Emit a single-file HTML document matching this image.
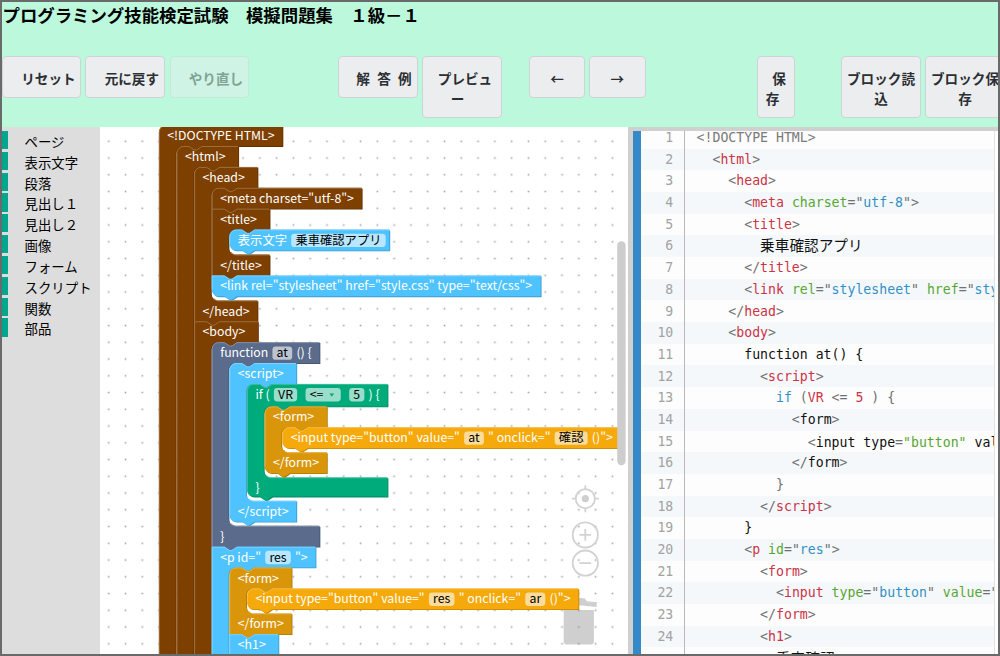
<!DOCTYPE html>
<html lang="ja">
<head>
<meta charset="utf-8">
<title>プログラミング技能検定試験 模擬問題集 １級－１</title>
<style>
html,body{margin:0;padding:0;}
body{width:1000px;height:656px;overflow:hidden;background:#fff;position:relative;
 font-family:"Noto Sans CJK JP","Liberation Sans",sans-serif;}
#hdr{position:absolute;left:0;top:0;width:1000px;height:127px;background:#bcf8dc;z-index:5;}
#ttl{position:absolute;left:2.5px;top:2.5px;font-weight:bold;font-size:17.4px;line-height:24px;color:#000;white-space:nowrap;}
.btn{position:absolute;top:56.1px;box-sizing:border-box;height:41.6px;border:1px solid #cfd3d7;border-radius:4px;
 background:#ebedef;color:#2b2f33;font-weight:bold;font-size:13.6px;line-height:20px;text-align:center;
 padding-top:10.8px;white-space:nowrap;}
.btn.two{height:61.5px;}
.btn.dis{opacity:.42;}
.btn span{display:block;}
#tbx{position:absolute;left:0;top:127px;width:100px;height:529px;background:#ddd;}
#tbx div{position:absolute;left:2px;width:98px;height:18.3px;border-left:6px solid #00a78e;box-sizing:border-box;
 font-size:13.4px;line-height:20.3px;color:#000;padding-left:16.6px;white-space:nowrap;}
#ws{position:absolute;left:100px;top:126.8px;width:528px;height:530px;background:#fff;overflow:hidden;}
#ws svg{position:absolute;left:0;top:0;}
#ws text{font-family:"Noto Sans CJK JP",sans-serif;font-size:14.667px;}
#cp{position:absolute;left:628px;top:127px;width:372px;height:529px;background:#fff;overflow:hidden;}
#cp .bt{position:absolute;left:0;top:0;width:372px;height:3.9px;background:#d0d0d0;z-index:3;}
#cp .bl{position:absolute;left:0;top:0;width:4.9px;height:529px;background:#d0d0d0;z-index:3;}
#cp .blue{position:absolute;left:4.9px;top:3.9px;width:7.8px;height:526px;background:#3689c9;z-index:2;}
#cp .gl{position:absolute;left:55.8px;top:3.9px;width:1px;height:526px;background:#b9b9b9;z-index:2;}
#cp .rl{position:absolute;left:366.4px;top:3.9px;width:1px;height:526px;background:#e2e2e2;z-index:2;}
#cp ol{list-style:none;margin:0;padding:0;position:absolute;left:12.7px;top:-0.1px;width:353.7px;}
#cp li{height:21.7px;line-height:21.7px;background:#fdfdfd;white-space:pre;position:relative;overflow:hidden;
 font-family:"DejaVu Sans Mono","Noto Sans CJK JP",monospace;font-size:13.2px;color:#111;}
#cp li b{font-weight:normal;font-size:14.65px;}
#cp li:nth-child(even){background:#f5f8fb;}
#cp li i{font-style:normal;position:absolute;left:0;top:0.1px;width:32.6px;text-align:right;color:#a2a2a2;}
#cp li code{font:inherit;position:absolute;left:55.9px;top:0.1px;}
.pun{color:#707070}.tag{color:#cc3344}.atn{color:#58a632}.atv{color:#3390c4}.dec{color:#7a7a7a}.kwd{color:#3390c4}.lit{color:#cc3344}.str{color:#58a632}
#frame{position:absolute;left:0;top:0;width:1000px;height:656px;box-sizing:border-box;border:2px solid #6a6a6a;border-bottom-width:2.3px;z-index:20;pointer-events:none;}
</style>
</head>
<body>
<div id="hdr">
 <div id="ttl">プログラミング技能検定試験　模擬問題集　１級－１</div>
 <div class="btn" style="left:2px;width:79.4px;padding-left:13.5px">リセット</div>
 <div class="btn" style="left:85.3px;width:80.1px;padding-left:13px">元に戻す</div>
 <div class="btn dis" style="left:169.5px;width:79.8px;padding-left:13px">やり直し</div>
 <div class="btn" style="left:337.5px;width:80px;padding-left:13px;word-spacing:4.2px">解 答 例</div>
 <div class="btn two" style="left:421.5px;width:80px;"><span style="padding-left:7px">プレビュ</span><span style="padding-right:8px">ー</span></div>
 <div class="btn" style="left:529px;width:56px;">←</div>
 <div class="btn" style="left:589px;width:56.5px;">→</div>
 <div class="btn two" style="left:757px;width:38px;"><span style="padding-left:6px">保</span><span style="padding-right:7px">存</span></div>
 <div class="btn two" style="left:841px;width:80px;"><span>ブロック読</span><span>込</span></div>
 <div class="btn two" style="left:925px;width:80px;"><span>ブロック保</span><span>存</span></div>
</div>
<div id="tbx">
 <div style="top:3.8px">ページ</div>
 <div style="top:24.65px">表示文字</div>
 <div style="top:45.5px">段落</div>
 <div style="top:66.35px">見出し１</div>
 <div style="top:87.2px">見出し２</div>
 <div style="top:108.05px">画像</div>
 <div style="top:128.9px">フォーム</div>
 <div style="top:149.75px">スクリプト</div>
 <div style="top:170.6px">関数</div>
 <div style="top:191.45px">部品</div>
</div>
<div id="ws">
<svg width="528" height="530" viewBox="0 0 528 530">
 <defs>
  <pattern id="grid" x="0.3" y="5.9" width="16.79" height="16.75" patternUnits="userSpaceOnUse">
   <rect x="7.6" y="7.6" width="1.6" height="1.6" fill="#a4a4a4"/>
  </pattern>
 </defs>
 <rect x="0" y="0" width="528" height="530" fill="url(#grid)"/>
 <!-- zoom controls -->
 <g fill="none" stroke="#d2d2d2" stroke-width="1.8">
  <circle cx="485.3" cy="371.7" r="9.6"/>
  <path d="M485.3 358.2v4M485.3 381.2v4M471.8 371.7h4M494.8 371.7h4"/>
  <circle cx="485.3" cy="407.9" r="12.6"/>
  <path d="M479.4 407.9h11.8M485.3 402v11.8"/>
  <circle cx="485.3" cy="436.1" r="12.6"/>
  <path d="M479.4 436.1h11.8"/>
 </g>
 <circle cx="485.3" cy="371.7" r="3.6" fill="#cfcfcf"/>
 <!-- trash -->
 <g fill="#7a7a7a" fill-opacity=".36">
  <path d="M463.7 483h30.2v31.5a3 3 0 0 1-3 3h-24.2a3 3 0 0 1-3-3z"/>
  <path transform="rotate(5.6 463 476.7)" d="M463 472h10.3l1.6-2.6h9.4l2.2 2.6h10.2v4.7h-33.7z"/>
 </g>
<g transform="translate(58.9,-1.76) scale(0.83920,0.83450)">
<path transform="translate(1,1)" d="M 0,8 A 8,8 0 0,1 8,0 H 147.26 V 25 H 50 l -6,4 -3,0 -6,-4 h -7 a 8,8 0 0,0 -8,8 v 744 a 8,8 0 0,0 8,8 H 147.26 V 810 H 30 l -6,4 -3,0 -6,-4 H 8 a 8,8 0 0,1 -8,-8 z" fill="#643300"/>
<path transform="translate(0,0)" d="M 0,8 A 8,8 0 0,1 8,0 H 147.26 V 25 H 50 l -6,4 -3,0 -6,-4 h -7 a 8,8 0 0,0 -8,8 v 744 a 8,8 0 0,0 8,8 H 147.26 V 810 H 30 l -6,4 -3,0 -6,-4 H 8 a 8,8 0 0,1 -8,-8 z" fill="#7d4000"/>
<path transform="translate(0,0)" d="M 0.5,802 V 8 A 7.5,7.5 0 0,1 8,0.5 H 146.76 M 22.99,782.01 a 8.5,8.5 0 0,0 5.01,3.49 H 146.76" fill="none" stroke="#a4794c" stroke-width="1"/>
<path transform="translate(22,26)" d="M 0,8 A 8,8 0 0,1 8,0 H 15 l 6,4 3,0 6,-4 H 73.57 V 25 H 50 l -6,4 -3,0 -6,-4 h -7 a 8,8 0 0,0 -8,8 v 689 a 8,8 0 0,0 8,8 H 73.57 V 755 H 30 l -6,4 -3,0 -6,-4 H 8 a 8,8 0 0,1 -8,-8 z" fill="#643300"/>
<path transform="translate(21,25)" d="M 0,8 A 8,8 0 0,1 8,0 H 15 l 6,4 3,0 6,-4 H 73.57 V 25 H 50 l -6,4 -3,0 -6,-4 h -7 a 8,8 0 0,0 -8,8 v 689 a 8,8 0 0,0 8,8 H 73.57 V 755 H 30 l -6,4 -3,0 -6,-4 H 8 a 8,8 0 0,1 -8,-8 z" fill="#7d4000"/>
<path transform="translate(21,25)" d="M 0.5,747 V 8 A 7.5,7.5 0 0,1 8,0.5 H 15 l 6,4 3,0 6,-4 H 73.07 M 22.99,727.01 a 8.5,8.5 0 0,0 5.01,3.49 H 73.07" fill="none" stroke="#a4794c" stroke-width="1"/>
<path transform="translate(43,51)" d="M 0,8 A 8,8 0 0,1 8,0 H 15 l 6,4 3,0 6,-4 H 75.53 V 25 H 50 l -6,4 -3,0 -6,-4 h -7 a 8,8 0 0,0 -8,8 v 119 a 8,8 0 0,0 8,8 H 75.53 V 185 H 30 l -6,4 -3,0 -6,-4 H 0 z" fill="#643300"/>
<path transform="translate(42,50)" d="M 0,8 A 8,8 0 0,1 8,0 H 15 l 6,4 3,0 6,-4 H 75.53 V 25 H 50 l -6,4 -3,0 -6,-4 h -7 a 8,8 0 0,0 -8,8 v 119 a 8,8 0 0,0 8,8 H 75.53 V 185 H 30 l -6,4 -3,0 -6,-4 H 0 z" fill="#7d4000"/>
<path transform="translate(42,50)" d="M 0.5,185 V 8 A 7.5,7.5 0 0,1 8,0.5 H 15 l 6,4 3,0 6,-4 H 75.03 M 22.99,157.01 a 8.5,8.5 0 0,0 5.01,3.49 H 75.03" fill="none" stroke="#a4794c" stroke-width="1"/>
<path transform="translate(64,76)" d="M 0,8 A 8,8 0 0,1 8,0 H 15 l 6,4 3,0 6,-4 H 178.71 V 25 H 30 l -6,4 -3,0 -6,-4 H 0 z" fill="#643300"/>
<path transform="translate(63,75)" d="M 0,8 A 8,8 0 0,1 8,0 H 15 l 6,4 3,0 6,-4 H 178.71 V 25 H 30 l -6,4 -3,0 -6,-4 H 0 z" fill="#7d4000"/>
<path transform="translate(63,75)" d="M 0.5,25 V 8 A 7.5,7.5 0 0,1 8,0.5 H 15 l 6,4 3,0 6,-4 H 178.21" fill="none" stroke="#a4794c" stroke-width="1"/>
<path transform="translate(64,101)" d="M 0,0 H 15 l 6,4 3,0 6,-4 H 68.92 V 25 H 50 l -6,4 -3,0 -6,-4 h -7 a 8,8 0 0,0 -8,8 v 14 a 8,8 0 0,0 8,8 H 68.92 V 80 H 30 l -6,4 -3,0 -6,-4 H 0 z" fill="#643300"/>
<path transform="translate(63,100)" d="M 0,0 H 15 l 6,4 3,0 6,-4 H 68.92 V 25 H 50 l -6,4 -3,0 -6,-4 h -7 a 8,8 0 0,0 -8,8 v 14 a 8,8 0 0,0 8,8 H 68.92 V 80 H 30 l -6,4 -3,0 -6,-4 H 0 z" fill="#7d4000"/>
<path transform="translate(63,100)" d="M 0.5,80 V 0.5 H 15 l 6,4 3,0 6,-4 H 68.42 M 22.99,52.01 a 8.5,8.5 0 0,0 5.01,3.49 H 68.42" fill="none" stroke="#a4794c" stroke-width="1"/>
<path transform="translate(85,126)" d="M 0,8 A 8,8 0 0,1 8,0 H 15 l 6,4 3,0 6,-4 H 190.62 V 25 H 30 l -6,4 -3,0 -6,-4 H 8 a 8,8 0 0,1 -8,-8 z" fill="#3f9ccc"/>
<path transform="translate(84,125)" d="M 0,8 A 8,8 0 0,1 8,0 H 15 l 6,4 3,0 6,-4 H 190.62 V 25 H 30 l -6,4 -3,0 -6,-4 H 8 a 8,8 0 0,1 -8,-8 z" fill="#4fc3ff"/>
<path transform="translate(84,125)" d="M 0.5,17 V 8 A 7.5,7.5 0 0,1 8,0.5 H 15 l 6,4 3,0 6,-4 H 190.12" fill="none" stroke="#84d5ff" stroke-width="1"/>
<path transform="translate(64,181)" d="M 0,0 H 15 l 6,4 3,0 6,-4 H 391.98 V 25 H 30 l -6,4 -3,0 -6,-4 H 8 a 8,8 0 0,1 -8,-8 z" fill="#3f9ccc"/>
<path transform="translate(63,180)" d="M 0,0 H 15 l 6,4 3,0 6,-4 H 391.98 V 25 H 30 l -6,4 -3,0 -6,-4 H 8 a 8,8 0 0,1 -8,-8 z" fill="#4fc3ff"/>
<path transform="translate(63,180)" d="M 0.5,17 V 0.5 H 15 l 6,4 3,0 6,-4 H 391.48" fill="none" stroke="#84d5ff" stroke-width="1"/>
<path transform="translate(43,236)" d="M 0,0 H 15 l 6,4 3,0 6,-4 H 76.08 V 25 H 50 l -6,4 -3,0 -6,-4 h -7 a 8,8 0 0,0 -8,8 v 449 a 8,8 0 0,0 8,8 H 76.08 V 515 H 30 l -6,4 -3,0 -6,-4 H 8 a 8,8 0 0,1 -8,-8 z" fill="#643300"/>
<path transform="translate(42,235)" d="M 0,0 H 15 l 6,4 3,0 6,-4 H 76.08 V 25 H 50 l -6,4 -3,0 -6,-4 h -7 a 8,8 0 0,0 -8,8 v 449 a 8,8 0 0,0 8,8 H 76.08 V 515 H 30 l -6,4 -3,0 -6,-4 H 8 a 8,8 0 0,1 -8,-8 z" fill="#7d4000"/>
<path transform="translate(42,235)" d="M 0.5,507 V 0.5 H 15 l 6,4 3,0 6,-4 H 75.58 M 22.99,487.01 a 8.5,8.5 0 0,0 5.01,3.49 H 75.58" fill="none" stroke="#a4794c" stroke-width="1"/>
<path transform="translate(64,261)" d="M 0,8 A 8,8 0 0,1 8,0 H 15 l 6,4 3,0 6,-4 H 128.39 V 25 H 50 l -6,4 -3,0 -6,-4 h -7 a 8,8 0 0,0 -8,8 v 179 a 8,8 0 0,0 8,8 H 128.39 V 245 H 30 l -6,4 -3,0 -6,-4 H 0 z" fill="#48566f"/>
<path transform="translate(63,260)" d="M 0,8 A 8,8 0 0,1 8,0 H 15 l 6,4 3,0 6,-4 H 128.39 V 25 H 50 l -6,4 -3,0 -6,-4 h -7 a 8,8 0 0,0 -8,8 v 179 a 8,8 0 0,0 8,8 H 128.39 V 245 H 30 l -6,4 -3,0 -6,-4 H 0 z" fill="#5a6b8b"/>
<path transform="translate(63,260)" d="M 0.5,245 V 8 A 7.5,7.5 0 0,1 8,0.5 H 15 l 6,4 3,0 6,-4 H 127.89 M 22.99,217.01 a 8.5,8.5 0 0,0 5.01,3.49 H 127.89" fill="none" stroke="#8c97ae" stroke-width="1"/>
<path transform="translate(85,286)" d="M 0,8 A 8,8 0 0,1 8,0 H 15 l 6,4 3,0 6,-4 H 79.8 V 25 H 50 l -6,4 -3,0 -6,-4 h -7 a 8,8 0 0,0 -8,8 v 124 a 8,8 0 0,0 8,8 H 79.8 V 190 H 30 l -6,4 -3,0 -6,-4 H 8 a 8,8 0 0,1 -8,-8 z" fill="#3f9ccc"/>
<path transform="translate(84,285)" d="M 0,8 A 8,8 0 0,1 8,0 H 15 l 6,4 3,0 6,-4 H 79.8 V 25 H 50 l -6,4 -3,0 -6,-4 h -7 a 8,8 0 0,0 -8,8 v 124 a 8,8 0 0,0 8,8 H 79.8 V 190 H 30 l -6,4 -3,0 -6,-4 H 8 a 8,8 0 0,1 -8,-8 z" fill="#4fc3ff"/>
<path transform="translate(84,285)" d="M 0.5,182 V 8 A 7.5,7.5 0 0,1 8,0.5 H 15 l 6,4 3,0 6,-4 H 79.3 M 22.99,162.01 a 8.5,8.5 0 0,0 5.01,3.49 H 79.3" fill="none" stroke="#84d5ff" stroke-width="1"/>
<path transform="translate(106,311)" d="M 0,8 A 8,8 0 0,1 8,0 H 15 l 6,4 3,0 6,-4 H 167.46 V 27 H 50 l -6,4 -3,0 -6,-4 h -7 a 8,8 0 0,0 -8,8 v 69 a 8,8 0 0,0 8,8 H 167.46 V 135 H 30 l -6,4 -3,0 -6,-4 H 8 a 8,8 0 0,1 -8,-8 z" fill="#008962"/>
<path transform="translate(105,310)" d="M 0,8 A 8,8 0 0,1 8,0 H 15 l 6,4 3,0 6,-4 H 167.46 V 27 H 50 l -6,4 -3,0 -6,-4 h -7 a 8,8 0 0,0 -8,8 v 69 a 8,8 0 0,0 8,8 H 167.46 V 135 H 30 l -6,4 -3,0 -6,-4 H 8 a 8,8 0 0,1 -8,-8 z" fill="#00ab7b"/>
<path transform="translate(105,310)" d="M 0.5,127 V 8 A 7.5,7.5 0 0,1 8,0.5 H 15 l 6,4 3,0 6,-4 H 166.96 M 22.99,109.01 a 8.5,8.5 0 0,0 5.01,3.49 H 166.96" fill="none" stroke="#4cc4a3" stroke-width="1"/>
<path transform="translate(127,338)" d="M 0,8 A 8,8 0 0,1 8,0 H 15 l 6,4 3,0 6,-4 H 74.16 V 25 H 50 l -6,4 -3,0 -6,-4 h -7 a 8,8 0 0,0 -8,8 v 14 a 8,8 0 0,0 8,8 H 74.16 V 80 H 30 l -6,4 -3,0 -6,-4 H 8 a 8,8 0 0,1 -8,-8 z" fill="#ae7808"/>
<path transform="translate(126,337)" d="M 0,8 A 8,8 0 0,1 8,0 H 15 l 6,4 3,0 6,-4 H 74.16 V 25 H 50 l -6,4 -3,0 -6,-4 h -7 a 8,8 0 0,0 -8,8 v 14 a 8,8 0 0,0 8,8 H 74.16 V 80 H 30 l -6,4 -3,0 -6,-4 H 8 a 8,8 0 0,1 -8,-8 z" fill="#d9960a"/>
<path transform="translate(126,337)" d="M 0.5,72 V 8 A 7.5,7.5 0 0,1 8,0.5 H 15 l 6,4 3,0 6,-4 H 73.66 M 22.99,52.01 a 8.5,8.5 0 0,0 5.01,3.49 H 73.66" fill="none" stroke="#e4b654" stroke-width="1"/>
<path transform="translate(148,363)" d="M 0,8 A 8,8 0 0,1 8,0 H 15 l 6,4 3,0 6,-4 H 403.31 V 25 H 30 l -6,4 -3,0 -6,-4 H 8 a 8,8 0 0,1 -8,-8 z" fill="#c48708"/>
<path transform="translate(147,362)" d="M 0,8 A 8,8 0 0,1 8,0 H 15 l 6,4 3,0 6,-4 H 403.31 V 25 H 30 l -6,4 -3,0 -6,-4 H 8 a 8,8 0 0,1 -8,-8 z" fill="#f5a90a"/>
<path transform="translate(147,362)" d="M 0.5,17 V 8 A 7.5,7.5 0 0,1 8,0.5 H 15 l 6,4 3,0 6,-4 H 402.81" fill="none" stroke="#f8c354" stroke-width="1"/>
<path transform="translate(64,506)" d="M 0,0 H 15 l 6,4 3,0 6,-4 H 123.69 V 25 H 50 l -6,4 -3,0 -6,-4 h -7 a 8,8 0 0,0 -8,8 v 149 a 8,8 0 0,0 8,8 H 123.69 V 215 H 30 l -6,4 -3,0 -6,-4 H 8 a 8,8 0 0,1 -8,-8 z" fill="#3f9ccc"/>
<path transform="translate(63,505)" d="M 0,0 H 15 l 6,4 3,0 6,-4 H 123.69 V 25 H 50 l -6,4 -3,0 -6,-4 h -7 a 8,8 0 0,0 -8,8 v 149 a 8,8 0 0,0 8,8 H 123.69 V 215 H 30 l -6,4 -3,0 -6,-4 H 8 a 8,8 0 0,1 -8,-8 z" fill="#4fc3ff"/>
<path transform="translate(63,505)" d="M 0.5,207 V 0.5 H 15 l 6,4 3,0 6,-4 H 123.19 M 22.99,187.01 a 8.5,8.5 0 0,0 5.01,3.49 H 123.19" fill="none" stroke="#84d5ff" stroke-width="1"/>
<path transform="translate(85,531)" d="M 0,8 A 8,8 0 0,1 8,0 H 15 l 6,4 3,0 6,-4 H 74.16 V 25 H 50 l -6,4 -3,0 -6,-4 h -7 a 8,8 0 0,0 -8,8 v 14 a 8,8 0 0,0 8,8 H 74.16 V 80 H 30 l -6,4 -3,0 -6,-4 H 0 z" fill="#ae7808"/>
<path transform="translate(84,530)" d="M 0,8 A 8,8 0 0,1 8,0 H 15 l 6,4 3,0 6,-4 H 74.16 V 25 H 50 l -6,4 -3,0 -6,-4 h -7 a 8,8 0 0,0 -8,8 v 14 a 8,8 0 0,0 8,8 H 74.16 V 80 H 30 l -6,4 -3,0 -6,-4 H 0 z" fill="#d9960a"/>
<path transform="translate(84,530)" d="M 0.5,80 V 8 A 7.5,7.5 0 0,1 8,0.5 H 15 l 6,4 3,0 6,-4 H 73.66 M 22.99,52.01 a 8.5,8.5 0 0,0 5.01,3.49 H 73.66" fill="none" stroke="#e4b654" stroke-width="1"/>
<path transform="translate(106,556)" d="M 0,8 A 8,8 0 0,1 8,0 H 15 l 6,4 3,0 6,-4 H 394.88 V 25 H 30 l -6,4 -3,0 -6,-4 H 8 a 8,8 0 0,1 -8,-8 z" fill="#c48708"/>
<path transform="translate(105,555)" d="M 0,8 A 8,8 0 0,1 8,0 H 15 l 6,4 3,0 6,-4 H 394.88 V 25 H 30 l -6,4 -3,0 -6,-4 H 8 a 8,8 0 0,1 -8,-8 z" fill="#f5a90a"/>
<path transform="translate(105,555)" d="M 0.5,17 V 8 A 7.5,7.5 0 0,1 8,0.5 H 15 l 6,4 3,0 6,-4 H 394.38" fill="none" stroke="#f8c354" stroke-width="1"/>
<path transform="translate(85,611)" d="M 0,0 H 15 l 6,4 3,0 6,-4 H 58.44 V 25 H 50 l -6,4 -3,0 -6,-4 h -7 a 8,8 0 0,0 -8,8 v 14 a 8,8 0 0,0 8,8 H 58.44 V 80 H 30 l -6,4 -3,0 -6,-4 H 8 a 8,8 0 0,1 -8,-8 z" fill="#3f9ccc"/>
<path transform="translate(84,610)" d="M 0,0 H 15 l 6,4 3,0 6,-4 H 58.44 V 25 H 50 l -6,4 -3,0 -6,-4 h -7 a 8,8 0 0,0 -8,8 v 14 a 8,8 0 0,0 8,8 H 58.44 V 80 H 30 l -6,4 -3,0 -6,-4 H 8 a 8,8 0 0,1 -8,-8 z" fill="#4fc3ff"/>
<path transform="translate(84,610)" d="M 0.5,72 V 0.5 H 15 l 6,4 3,0 6,-4 H 57.94 M 22.99,52.01 a 8.5,8.5 0 0,0 5.01,3.49 H 57.94" fill="none" stroke="#84d5ff" stroke-width="1"/>
<path transform="translate(106,636)" d="M 0,8 A 8,8 0 0,1 8,0 H 15 l 6,4 3,0 6,-4 H 146.65 V 25 H 30 l -6,4 -3,0 -6,-4 H 8 a 8,8 0 0,1 -8,-8 z" fill="#3f9ccc"/>
<path transform="translate(105,635)" d="M 0,8 A 8,8 0 0,1 8,0 H 15 l 6,4 3,0 6,-4 H 146.65 V 25 H 30 l -6,4 -3,0 -6,-4 H 8 a 8,8 0 0,1 -8,-8 z" fill="#4fc3ff"/>
<path transform="translate(105,635)" d="M 0.5,17 V 8 A 7.5,7.5 0 0,1 8,0.5 H 15 l 6,4 3,0 6,-4 H 146.15" fill="none" stroke="#84d5ff" stroke-width="1"/>
<rect x="157.63" y="130" width="112.59" height="16" rx="4" ry="4" fill="#fff" fill-opacity=".6"/>
<rect x="135.29" y="265" width="23.56" height="16" rx="4" ry="4" fill="#fff" fill-opacity=".6"/>
<rect x="137.03" y="315" width="27.73" height="16" rx="4" ry="4" fill="#fff" fill-opacity=".6"/>
<rect x="174.76" y="315" width="41.97" height="16" rx="4" ry="4" fill="#fff" fill-opacity=".6"/>
<rect x="226.73" y="315" width="18.13" height="16" rx="4" ry="4" fill="#fff" fill-opacity=".6"/>
<rect x="363.69" y="367" width="23.56" height="16" rx="4" ry="4" fill="#fff" fill-opacity=".6"/>
<rect x="471.61" y="367" width="39.31" height="16" rx="4" ry="4" fill="#fff" fill-opacity=".6"/>
<rect x="126.7" y="510" width="30.5" height="16" rx="4" ry="4" fill="#fff" fill-opacity=".6"/>
<rect x="321.69" y="560" width="30.5" height="16" rx="4" ry="4" fill="#fff" fill-opacity=".6"/>
<rect x="436.56" y="560" width="23.94" height="16" rx="4" ry="4" fill="#fff" fill-opacity=".6"/>
<rect x="178.63" y="640" width="68.63" height="16" rx="4" ry="4" fill="#fff" fill-opacity=".6"/>
<text x="10" y="18" fill="#fff">&lt;!DOCTYPE HTML&gt;</text>
<text x="31" y="43" fill="#fff">&lt;html&gt;</text>
<text x="31" y="773" fill="#fff">&lt;/html&gt;</text>
<text x="52" y="68" fill="#fff">&lt;head&gt;</text>
<text x="52" y="228" fill="#fff">&lt;/head&gt;</text>
<text x="73" y="93" fill="#fff">&lt;meta charset=&quot;utf-8&quot;&gt;</text>
<text x="73" y="118" fill="#fff">&lt;title&gt;</text>
<text x="73" y="173" fill="#fff">&lt;/title&gt;</text>
<text x="94" y="143" fill="#fff">表示文字</text>
<text x="162.63" y="143" fill="#000">乗車確認アプリ</text>
<text x="73" y="198" fill="#fff">&lt;link rel=&quot;stylesheet&quot; href=&quot;style.css&quot; type=&quot;text/css&quot;&gt;</text>
<text x="52" y="253" fill="#fff">&lt;body&gt;</text>
<text x="52" y="743" fill="#fff">&lt;/body&gt;</text>
<text x="73" y="278" fill="#fff">function</text>
<text x="140.29" y="278" fill="#000">at</text>
<text x="163.85" y="278" fill="#fff">() {</text>
<text x="73" y="498" fill="#fff">}</text>
<text x="94" y="303" fill="#fff">&lt;script&gt;</text>
<text x="94" y="468" fill="#fff">&lt;/script&gt;</text>
<text x="115" y="328" fill="#fff">if (</text>
<text x="142.03" y="328" fill="#000">VR</text>
<path d="M203.23 321.6 h5.6 l-2.8 3.8z" fill="#00ab7b"/>
<text x="179.76" y="328" fill="#000">&lt;=</text>
<text x="231.73" y="328" fill="#000">5</text>
<text x="249.87" y="328" fill="#fff">) {</text>
<text x="115" y="439" fill="#fff">}</text>
<text x="136" y="355" fill="#fff">&lt;form&gt;</text>
<text x="136" y="410" fill="#fff">&lt;/form&gt;</text>
<text x="157" y="380" fill="#fff">&lt;input type=&quot;button&quot; value=&quot;</text>
<text x="368.69" y="380" fill="#000">at</text>
<text x="392.24" y="380" fill="#fff">&quot; onclick=&quot;</text>
<text x="476.61" y="380" fill="#000">確認</text>
<text x="515.92" y="380" fill="#fff">()&quot;&gt;</text>
<text x="73" y="523" fill="#fff">&lt;p id=&quot;</text>
<text x="131.7" y="523" fill="#000">res</text>
<text x="162.21" y="523" fill="#fff">&quot;&gt;</text>
<text x="73" y="713" fill="#fff">&lt;/p&gt;</text>
<text x="94" y="548" fill="#fff">&lt;form&gt;</text>
<text x="94" y="603" fill="#fff">&lt;/form&gt;</text>
<text x="115" y="573" fill="#fff">&lt;input type=&quot;button&quot; value=&quot;</text>
<text x="326.69" y="573" fill="#000">res</text>
<text x="357.19" y="573" fill="#fff">&quot; onclick=&quot;</text>
<text x="441.56" y="573" fill="#000">ar</text>
<text x="465.49" y="573" fill="#fff">()&quot;&gt;</text>
<text x="94" y="628" fill="#fff">&lt;h1&gt;</text>
<text x="94" y="683" fill="#fff">&lt;/h1&gt;</text>
<text x="115" y="653" fill="#fff">表示文字</text>
<text x="183.63" y="653" fill="#000">乗車確認</text>
</g>
 <!-- scrollbar -->
 <rect x="517.2" y="114.2" width="8.4" height="224" rx="4.2" ry="4.2" fill="#cdcdcd"/>
</svg>
</div>
<div id="cp">
 <div class="bt"></div><div class="bl"></div><div class="blue"></div><div class="gl"></div><div class="rl"></div>
 <ol>
<li><i>1</i><code><span class="dec">&lt;!DOCTYPE HTML&gt;</span></code></li>
<li><i>2</i><code>  <span class="pun">&lt;</span><span class="tag">html</span><span class="pun">&gt;</span></code></li>
<li><i>3</i><code>    <span class="pun">&lt;</span><span class="tag">head</span><span class="pun">&gt;</span></code></li>
<li><i>4</i><code>      <span class="pun">&lt;</span><span class="tag">meta</span> <span class="atn">charset</span><span class="pun">=&quot;</span><span class="atv">utf-8</span><span class="pun">&quot;</span><span class="pun">&gt;</span></code></li>
<li><i>5</i><code>      <span class="pun">&lt;</span><span class="tag">title</span><span class="pun">&gt;</span></code></li>
<li><i>6</i><code>        <b>乗車確認アプリ</b></code></li>
<li><i>7</i><code>      <span class="pun">&lt;/</span><span class="tag">title</span><span class="pun">&gt;</span></code></li>
<li><i>8</i><code>      <span class="pun">&lt;</span><span class="tag">link</span> <span class="atn">rel</span><span class="pun">=&quot;</span><span class="atv">stylesheet</span><span class="pun">&quot;</span> <span class="atn">href</span><span class="pun">=&quot;</span><span class="atv">style.css</span><span class="pun">&quot;</span> <span class="atn">type</span><span class="pun">=&quot;</span><span class="atv">text/css</span><span class="pun">&quot;</span><span class="pun">&gt;</span></code></li>
<li><i>9</i><code>    <span class="pun">&lt;/</span><span class="tag">head</span><span class="pun">&gt;</span></code></li>
<li><i>10</i><code>    <span class="pun">&lt;</span><span class="tag">body</span><span class="pun">&gt;</span></code></li>
<li><i>11</i><code>      function at() {</code></li>
<li><i>12</i><code>        <span class="pun">&lt;</span><span class="tag">script</span><span class="pun">&gt;</span></code></li>
<li><i>13</i><code>          <span class="kwd">if</span><span class="pun"> (</span><span class="lit">VR</span><span class="pun"> &lt;= </span><span class="lit">5</span><span class="pun"> ) {</span></code></li>
<li><i>14</i><code>            <span class="pun">&lt;</span>form<span class="pun">&gt;</span></code></li>
<li><i>15</i><code>              <span class="pun">&lt;</span>input type<span class="pun">=</span><span class="str">&quot;button&quot;</span> value<span class="pun">=</span><span class="str">&quot;at&quot;</span> onclick<span class="pun">=</span><span class="str">&quot;<b>確認</b>()&quot;</span><span class="pun">&gt;</span></code></li>
<li><i>16</i><code>            <span class="pun">&lt;/</span>form<span class="pun">&gt;</span></code></li>
<li><i>17</i><code>          <span class="pun">}</span></code></li>
<li><i>18</i><code>        <span class="pun">&lt;/</span><span class="tag">script</span><span class="pun">&gt;</span></code></li>
<li><i>19</i><code>      }</code></li>
<li><i>20</i><code>      <span class="pun">&lt;</span><span class="tag">p</span> <span class="atn">id</span><span class="pun">=&quot;</span><span class="atv">res</span><span class="pun">&quot;</span><span class="pun">&gt;</span></code></li>
<li><i>21</i><code>        <span class="pun">&lt;</span><span class="tag">form</span><span class="pun">&gt;</span></code></li>
<li><i>22</i><code>          <span class="pun">&lt;</span><span class="tag">input</span> <span class="atn">type</span><span class="pun">=&quot;</span><span class="atv">button</span><span class="pun">&quot;</span> <span class="atn">value</span><span class="pun">=&quot;</span><span class="atv">res</span><span class="pun">&quot;</span> <span class="atn">onclick</span><span class="pun">=&quot;</span><span class="atv">ar()</span><span class="pun">&quot;</span><span class="pun">&gt;</span></code></li>
<li><i>23</i><code>        <span class="pun">&lt;/</span><span class="tag">form</span><span class="pun">&gt;</span></code></li>
<li><i>24</i><code>        <span class="pun">&lt;</span><span class="tag">h1</span><span class="pun">&gt;</span></code></li>
<li><code>          <b>乗車確認</b></code></li>
 </ol>
</div>
<div id="frame"></div>
</body>
</html>
